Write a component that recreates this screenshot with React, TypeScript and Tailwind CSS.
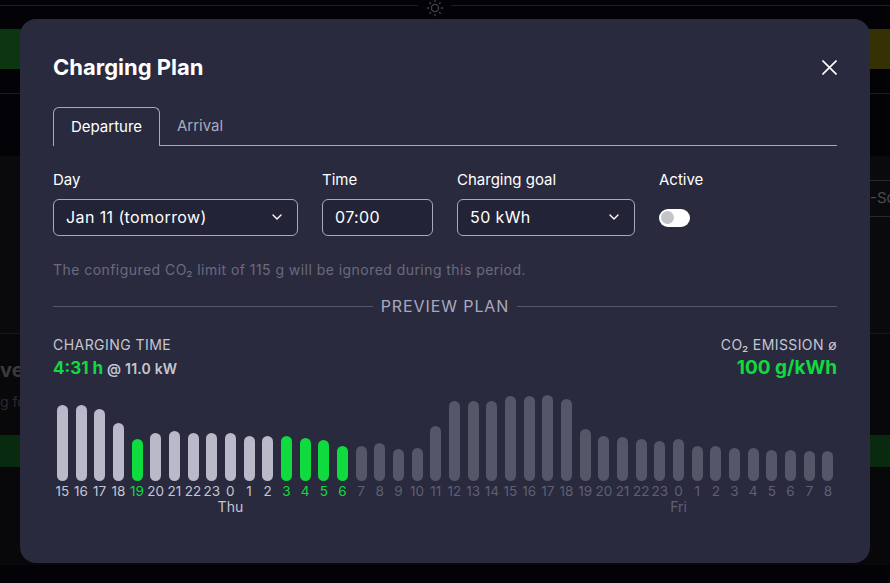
import { ChevronDown } from 'lucide-react'

type Hour = { label: string; height: number; state: 'past' | 'active' | 'future'; day?: string }

const hours: Hour[] = [
  { label: '15', height: 76, state: 'past' },
  { label: '16', height: 76, state: 'past' },
  { label: '17', height: 72, state: 'past' },
  { label: '18', height: 58, state: 'past' },
  { label: '19', height: 42, state: 'active' },
  { label: '20', height: 48, state: 'past' },
  { label: '21', height: 50, state: 'past' },
  { label: '22', height: 48, state: 'past' },
  { label: '23', height: 48, state: 'past' },
  { label: '0', height: 48, state: 'past', day: 'Thu' },
  { label: '1', height: 45, state: 'past' },
  { label: '2', height: 45, state: 'past' },
  { label: '3', height: 45, state: 'active' },
  { label: '4', height: 43, state: 'active' },
  { label: '5', height: 41, state: 'active' },
  { label: '6', height: 35, state: 'active' },
  { label: '7', height: 35, state: 'future' },
  { label: '8', height: 38, state: 'future' },
  { label: '9', height: 32, state: 'future' },
  { label: '10', height: 33, state: 'future' },
  { label: '11', height: 55, state: 'future' },
  { label: '12', height: 80, state: 'future' },
  { label: '13', height: 80, state: 'future' },
  { label: '14', height: 80, state: 'future' },
  { label: '15', height: 85, state: 'future' },
  { label: '16', height: 85, state: 'future' },
  { label: '17', height: 86, state: 'future' },
  { label: '18', height: 82, state: 'future' },
  { label: '19', height: 52, state: 'future' },
  { label: '20', height: 45, state: 'future' },
  { label: '21', height: 44, state: 'future' },
  { label: '22', height: 42, state: 'future' },
  { label: '23', height: 40, state: 'future' },
  { label: '0', height: 42, state: 'future', day: 'Fri' },
  { label: '1', height: 35, state: 'future' },
  { label: '2', height: 35, state: 'future' },
  { label: '3', height: 33, state: 'future' },
  { label: '4', height: 33, state: 'future' },
  { label: '5', height: 31, state: 'future' },
  { label: '6', height: 31, state: 'future' },
  { label: '7', height: 30, state: 'future' },
  { label: '8', height: 30, state: 'future' },
]

const barColor = { past: 'bg-[#b9b9c9]', active: 'bg-[#0fdb3f]', future: 'bg-[#555667]' }
const labelColor = { past: 'text-[#c6c6d2]', active: 'text-[#0fdb3f]', future: 'text-[#5f6072]' }

function Select({ value }: { value: string }) {
  return (
    <div className="flex h-[37px] w-full items-center justify-between rounded-[6px] border border-[#a9a9bd] bg-[#222336] pl-3 pr-3 pb-px text-[16px] tracking-[0.4px] text-white">
      <span>{value}</span>
      <ChevronDown className="h-4 w-4" strokeWidth={2} />
    </div>
  )
}

function Backdrop() {
  return (
    <div className="flex h-[583px] flex-col overflow-hidden bg-[#020207]">
      <div className="flex h-[29px] shrink-0 items-start pt-[5px]">
        <div className="h-px w-[418px] bg-[#1c1c24]" />
        <svg className="-mt-[5px] ml-[7px] mr-[6px] h-[20px] w-[20px] text-[#45454d]" viewBox="0 0 20 20" fill="none" stroke="currentColor" strokeWidth="1.3" strokeLinecap="round">
          <circle cx="10" cy="8" r="3.6" />
          <path d="M10 .4v1.2M10 14.4v1.2M2.4 8h1.2M16.4 8h1.2M4.6 2.6l.9.9M14.5 12.5l.9.9M4.6 13.4l.9-.9M14.5 3.5l.9-.9" />
        </svg>
        <div className="h-px flex-1 bg-[#1c1c24]" />
      </div>
      <div className="flex h-[40px] shrink-0 items-center justify-between">
        <div className="flex h-full w-[30px] items-center bg-[#0b3610] pl-[9px] text-sm text-[#1d2a1c]">1.1</div>
        <div className="h-full w-[30px] bg-[#363104]" />
      </div>
      <div className="mt-[24px] h-px shrink-0 bg-[#1c1c20]" />
      <div className="mt-[62px] h-[177px] shrink-0 bg-[#0a0a0d] pt-[24px]">
        <div className="ml-[870px] flex h-[37px] w-[40px] items-center whitespace-nowrap border-y border-[#2a2a2e] text-[15px] text-[#4a4a4e]">-Sc</div>
      </div>
      <div className="h-px shrink-0 bg-[#18181c]" />
      <div className="flex h-[101px] shrink-0 flex-col bg-[#08080b] pt-[26px]">
        <div className="whitespace-nowrap text-[20px] font-bold leading-5 text-[#3a3a3e]">ve</div>
        <div className="mt-[11px] whitespace-nowrap text-[14px] text-[#2a2a2e]">g fo</div>
      </div>
      <div className="h-[32px] shrink-0 bg-[#082a0e]" />
      <div className="h-[98px] shrink-0 bg-[#08080b]" />
    </div>
  )
}

export default function App() {
  return (
    <div className="relative h-[583px] w-[890px] overflow-hidden font-['Inter','Noto_Sans',sans-serif]">
      <Backdrop />

      {/* 弹窗 */}
      <div className="absolute left-[20px] top-[19px] flex h-[544px] w-[850px] flex-col rounded-[16px] bg-[#292a3e] px-[33px] pt-[33px]">
        <div className="flex h-[30px] items-center justify-between">
          <h2 className="text-[22px] font-bold text-white">Charging Plan</h2>
          <svg className="h-[15px] w-[15px] text-white" viewBox="0 0 15 15" fill="none" stroke="currentColor" strokeWidth="1.6">
            <path d="M.5.5l14 14M14.5.5l-14 14" />
          </svg>
        </div>

        <div className="mt-[25px] flex h-[39px] items-stretch border-b border-[#a9a9bd]">
          <div className="-mb-px flex w-[107px] items-center justify-center rounded-t-[6px] border border-b-0 border-[#a9a9bd] bg-[#292a3e] text-[15px] text-white">
            Departure
          </div>
          <div className="flex items-center px-[17px] text-[15px] text-[#a9a9bd]">Arrival</div>
        </div>

        <div className="mt-[24px] flex gap-6">
          <div className="flex w-[245px] flex-col gap-[9px]">
            <span className="text-[15px] leading-[20px] text-white">Day</span>
            <Select value="Jan 11 (tomorrow)" />
          </div>
          <div className="flex w-[111px] flex-col gap-[9px]">
            <span className="text-[15px] leading-[20px] text-white">Time</span>
            <div className="flex h-[37px] items-center rounded-[6px] border border-[#a9a9bd] bg-[#222336] pb-px pl-3 text-[16px] tracking-[0.4px] text-white">07:00</div>
          </div>
          <div className="flex w-[178px] flex-col gap-[9px]">
            <span className="text-[15px] leading-[20px] text-white">Charging goal</span>
            <Select value="50 kWh" />
          </div>
          <div className="flex flex-col gap-[9px]">
            <span className="text-[15px] leading-[20px] text-white">Active</span>
            <div className="flex h-[37px] items-center">
              <div className="flex h-[18px] w-[31px] items-center rounded-full bg-white pl-[2px]">
                <div className="h-[13px] w-[13px] rounded-full bg-[#c4c4c8]" />
              </div>
            </div>
          </div>
        </div>

        <p className="mt-[25px] text-[14px] leading-[18px] tracking-[0.45px] text-[#6a6b7d]">
          The configured CO₂ limit of 115 g will be ignored during this period.
        </p>

        <div className="mt-[17px] flex items-center gap-2">
          <div className="h-px flex-1 bg-[#55566a]" />
          <span className="text-[16px] leading-5 tracking-[0.9px] text-[#a9a9bd]">PREVIEW PLAN</span>
          <div className="h-px flex-1 bg-[#55566a]" />
        </div>

        <div className="mt-[20px] flex justify-between">
          <div>
            <div className="text-[14px] leading-[18px] tracking-[0.45px] text-[#c6c6d2]">CHARGING TIME</div>
            <div className="mt-[4px] flex items-baseline gap-1 leading-[20px]">
              <span className="text-[17px] font-bold text-[#0fdb3f]">4:31 h</span>
              <span className="text-[14px] font-semibold tracking-[0.2px] text-[#c6c6d2]">@ 11.0 kW</span>
            </div>
          </div>
          <div className="text-right">
            <div className="text-[14px] leading-[18px] tracking-[0.4px] text-[#c6c6d2]">CO₂ EMISSION ø</div>
            <div className="mt-[4px] text-[19px] font-bold leading-[20px] text-[#0fdb3f]">100 g/kWh</div>
          </div>
        </div>

        {/* 柱状图 */}
        <div className="mt-[12px] flex">
          {hours.map((hour, index) => (
            <div key={index} className="flex min-w-0 flex-1 flex-col items-center">
              <div className="flex h-[90px] items-end">
                <div className={`w-[11px] rounded-full ${barColor[hour.state]}`} style={{ height: hour.height }} />
              </div>
              <span className={`mt-[3px] whitespace-nowrap text-[13.5px] leading-[15px] ${labelColor[hour.state]}`}>{hour.label}</span>
              {hour.day && (
                <span className={`whitespace-nowrap text-[14px] leading-[15px] ${hour.state === 'past' ? 'text-[#c6c6d2]' : 'text-[#5f6072]'}`}>{hour.day}</span>
              )}
            </div>
          ))}
        </div>
      </div>
    </div>
  )
}
